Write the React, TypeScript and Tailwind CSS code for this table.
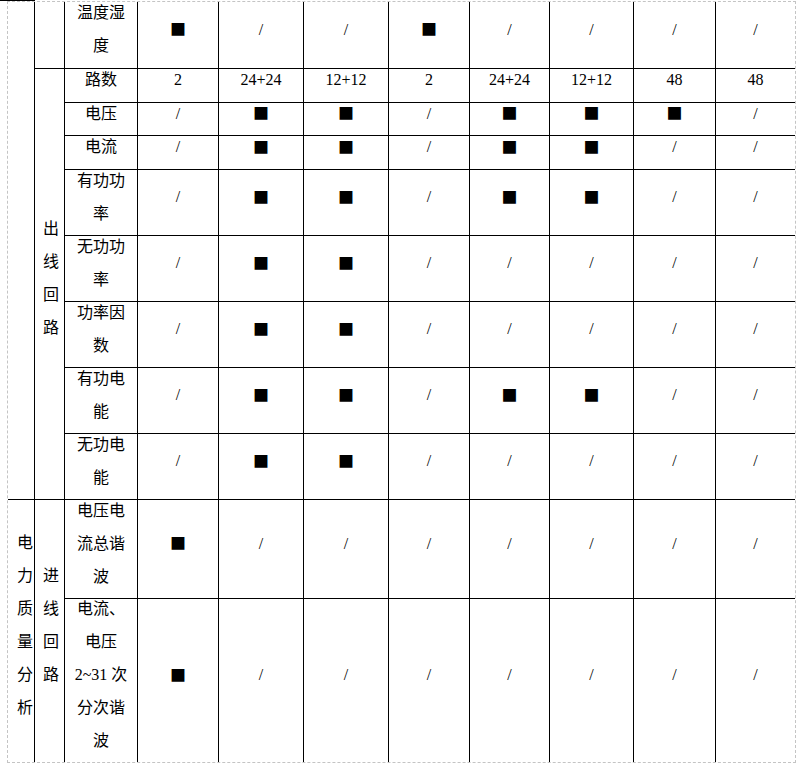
import React from "react";

type Val = string;

const B = "■";
const S = "/";

const labels: string[][] = [
  ["温度湿", "度"],
  ["路数"],
  ["电压"],
  ["电流"],
  ["有功功", "率"],
  ["无功功", "率"],
  ["功率因", "数"],
  ["有功电", "能"],
  ["无功电", "能"],
  ["电压电", "流总谐", "波"],
  ["电流、", "电压", "2~31 次", "分次谐", "波"],
];

const data: Val[][] = [
  [B, S, S, B, S, S, S, S],
  ["2", "24+24", "12+12", "2", "24+24", "12+12", "48", "48"],
  [S, B, B, S, B, B, B, S],
  [S, B, B, S, B, B, S, S],
  [S, B, B, S, B, B, S, S],
  [S, B, B, S, S, S, S, S],
  [S, B, B, S, S, S, S, S],
  [S, B, B, S, B, B, S, S],
  [S, B, B, S, S, S, S, S],
  [B, S, S, S, S, S, S, S],
  [B, S, S, S, S, S, S, S],
];

function Lines({ lines }: { lines: string[] }) {
  return (
    <div className="leading-[33px] pb-[12px] text-center whitespace-nowrap">
      {lines.map((l, i) => (
        <div key={i}>{l}</div>
      ))}
    </div>
  );
}

function Value({ v }: { v: Val }) {
  if (v === B) {
    return (
      <div className="leading-[33px] pb-[12px] text-center">
        <span className="font-['Noto_Sans_CJK_SC',sans-serif] text-[16px]">■</span>
      </div>
    );
  }
  return <div className="leading-[33px] pb-[12px] text-center whitespace-nowrap">{v}</div>;
}

export default function App() {
  const lastRow = data.length - 1;
  const cells: React.ReactNode[] = [];

  data.forEach((row, r) => {
    const bottom = r === lastRow ? "" : "border-b";
    if (r === 0) {
      cells.push(
        <div key="c1-top" className="row-span-9 border-r border-b border-black" />
      );
      cells.push(<div key="c2-top" className="border-r border-b border-black" />);
    }
    if (r === 1) {
      cells.push(
        <div
          key="c2-out"
          className="row-span-8 flex items-center justify-start pl-[8px] border-r border-b border-black"
        >
          <Lines lines={["出", "线", "回", "路"]} />
        </div>
      );
    }
    if (r === 9) {
      cells.push(
        <div
          key="c1-pq"
          className="row-span-2 flex items-center justify-start pl-[9px] border-r border-black"
        >
          <Lines lines={["电", "力", "质", "量", "分", "析"]} />
        </div>
      );
      cells.push(
        <div
          key="c2-in"
          className="row-span-2 flex items-center justify-start pl-[8px] border-r border-black"
        >
          <Lines lines={["进", "线", "回", "路"]} />
        </div>
      );
    }
    cells.push(
      <div
        key={`l-${r}`}
        className={`flex items-center justify-center border-r border-black ${bottom}`}
      >
        <Lines lines={labels[r]} />
      </div>
    );
    row.forEach((v, c) => {
      const right = c === row.length - 1 ? "" : "border-r";
      cells.push(
        <div
          key={`d-${r}-${c}`}
          className={`flex items-center justify-center border-black ${right} ${bottom}`}
        >
          <Value v={v} />
        </div>
      );
    });
  });

  return (
    <div className="relative w-[799px] h-[766px] bg-white overflow-hidden text-black text-[16px] font-['Liberation_Serif','Noto_Sans_CJK_SC',serif]">
      <div className="absolute left-0 top-0 w-[35px] h-[1px] bg-black" />
      <div className="ml-[7px] mt-[1px] w-[789px] border border-dashed border-[#c4c4c4]">
        <div className="grid grid-cols-[27px_30px_73px_81px_85px_85px_81px_80px_84px_82px_79px] grid-rows-[67px_34px_33px_34px_66px_66px_66px_66px_66px_99px_163px]">
          {cells}
        </div>
      </div>
    </div>
  );
}
